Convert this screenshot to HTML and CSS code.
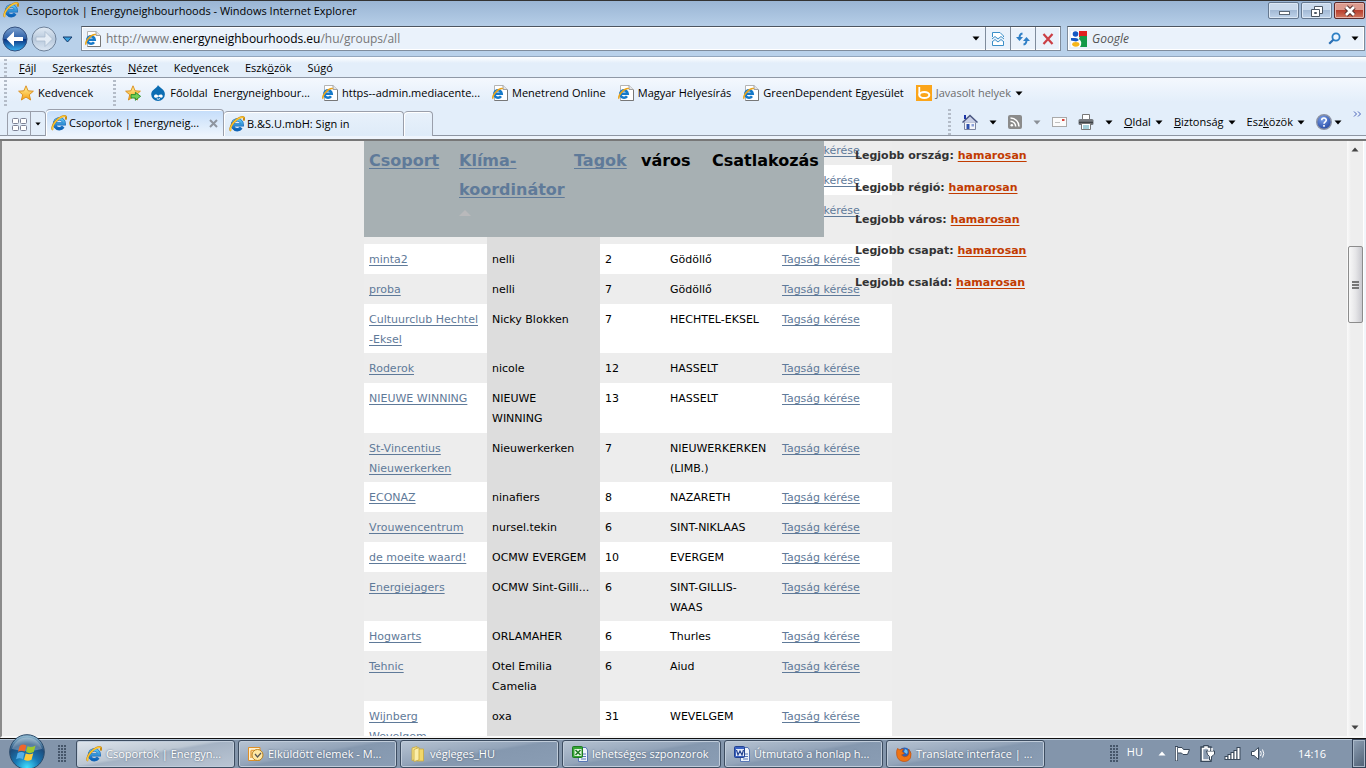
FILE: index.html
```html
<!DOCTYPE html>
<html lang="hu">
<head>
<meta charset="utf-8">
<title>Csoportok | Energyneighbourhoods</title>
<link rel="stylesheet" href="styles.css">
</head>
<body>
<svg class="defs" aria-hidden="true">
  <defs>
    <linearGradient id="gBlue" x1="0" y1="0" x2="0" y2="1"><stop offset="0" stop-color="#5cc4f4"/><stop offset="1" stop-color="#0b62b8"/></linearGradient>
    <linearGradient id="gStar" x1="0" y1="0" x2="0" y2="1"><stop offset="0" stop-color="#fff3a0"/><stop offset="1" stop-color="#f7a010"/></linearGradient>
    <linearGradient id="gBack" x1="0" y1="0" x2="0" y2="1"><stop offset="0" stop-color="#7fa3cf"/><stop offset=".48" stop-color="#2c5fa8"/><stop offset=".5" stop-color="#0a2f7c"/><stop offset="1" stop-color="#38b4f4"/></linearGradient>
    <linearGradient id="gFwd" x1="0" y1="0" x2="0" y2="1"><stop offset="0" stop-color="#e2ebf5"/><stop offset=".5" stop-color="#b8c9dc"/><stop offset="1" stop-color="#dce7f3"/></linearGradient>
    <radialGradient id="gOrb" cx=".5" cy=".95" r=".9"><stop offset="0" stop-color="#3fe0ff"/><stop offset=".4" stop-color="#1878b4"/><stop offset=".75" stop-color="#1d4c7c"/><stop offset="1" stop-color="#8ab4cc"/></radialGradient>
    <radialGradient id="gHelp" cx=".4" cy=".3" r=".8"><stop offset="0" stop-color="#7ba0e8"/><stop offset="1" stop-color="#1c3f9c"/></radialGradient>
  </defs>
  <symbol id="ie" viewBox="0 0 16 16">
    <path d="M3.4 8.9H13.2A4.9 4.9 0 1 0 12.2 11.8" fill="none" stroke="#1467b8" stroke-width="3.4"/>
    <path d="M3.6 8.7H13A4.8 4.8 0 1 0 12 11.6" fill="none" stroke="url(#gBlue)" stroke-width="2.4"/>
    <path d="M2 14.8C.4 13.6 1.6 9.6 5.2 5.8C9 1.9 13.4.2 14.7 1.5C15.3 2.2 15.1 3.4 14.5 4.6" fill="none" stroke="#c98a10" stroke-width="2"/>
    <path d="M2 14.7C.6 13.6 1.8 9.6 5.3 5.9C9 2 13.4.4 14.5 1.6" fill="none" stroke="#fdc935" stroke-width="1.2"/>
  </symbol>
  <symbol id="page" viewBox="0 0 16 16">
    <path d="M2.5.5H11L15.5 4.5V15.5H2.5Z" fill="#fff" stroke="#b4b4b4"/>
    <path d="M15.5 5V15.5H2.5" fill="none" stroke="#777"/>
    <path d="M11 .5V4.5H15.5" fill="#e4e4e4" stroke="#a0a0a0"/>
    <path d="M2.6 8.8H9.7A3.7 3.7 0 1 0 9 11.2" fill="none" stroke="#1679c9" stroke-width="2.6"/>
    <path d="M1.2 13.6C.1 12.4 1.8 8.8 4.5 6.3C7.2 3.8 10.1 2.8 10.8 3.9" fill="none" stroke="#eba51b" stroke-width="1.6"/>
  </symbol>
  <symbol id="star" viewBox="0 0 16 16"><path d="M8 .8L10.1 5.8L15.4 6.2L11.3 9.7L12.6 15L8 12.1L3.4 15L4.7 9.7L.6 6.2L5.9 5.8Z" fill="url(#gStar)" stroke="#d88a17" stroke-width=".9"/></symbol>
  <symbol id="staradd" viewBox="0 0 16 16"><use href="#star"/><path d="M6 9.6H10.4V7.3L15.6 11.3L10.4 15.3V13H6Z" fill="#72d055" stroke="#238a2b" stroke-width=".9"/></symbol>
  <symbol id="drupal" viewBox="0 0 16 16"><path d="M8 0C9.2 2.4 14.9 4.3 14.9 9.3A6.8 6.6 0 0 1 1.2 9.3C1.2 4.6 7 3.4 8 0Z" fill="#0b6db3"/><path d="M4 11.2C4.8 8.7 7 9.6 8.2 10.7C9.7 9.4 11.9 8.8 12.7 10.8C13 12.9 10.6 13.3 8.6 11.6C7 13.1 4.5 13.5 4 11.2Z" fill="#fff"/><path d="M6.8 13.8Q8.4 14.7 10 13.6" fill="none" stroke="#fff"/></symbol>
  <symbol id="bing" viewBox="0 0 16 16"><path d="M0 0H16V16H0Z" fill="#fba51a"/><path d="M3.3 2V10.3" stroke="#fff" stroke-width="1.8"/><ellipse cx="8.3" cy="10" rx="5" ry="3" fill="none" stroke="#fff" stroke-width="2"/></symbol>
  <symbol id="down" viewBox="0 0 8 5"><path d="M.5.5H7.5L4 4.5Z" fill="currentColor"/></symbol>
  <symbol id="winlogo" viewBox="0 0 20 20"><path d="M3.4 4.5Q6.3 2.2 9.4 4.1L8 9.6Q5 8 1.8 9.8Z" fill="#f0662c"/><path d="M10.5 4.7Q13.8 6.5 17.8 4L16.1 10Q12.6 12 9.2 10.1Z" fill="#9cc92f"/><path d="M1.5 10.9Q4.7 9.1 7.7 10.8L6.2 16.5Q3.2 14.7 .1 16.5Z" fill="#55aee8"/><path d="M8.8 11.4Q12.3 13 15.7 11.2L14.1 17Q10.8 18.9 7.3 17Z" fill="#fecb38"/></symbol>
</svg>

<header class="chrome">
  <div class="titlebar">
    <svg class="i16"><use href="#ie"/></svg>
    <span class="title">Csoportok | Energyneighbourhoods - Windows Internet Explorer</span>
    <div class="winbtns">
      <button class="winbtn" aria-label="Kis méret"><svg width="14" height="10" viewBox="0 0 14 10"><rect x="2.5" y="5.5" width="10" height="3" fill="#fff" stroke="#5a6673"/></svg></button>
      <button class="winbtn" aria-label="Előző méret"><svg width="14" height="12" viewBox="0 0 14 12"><path d="M4.5 1.5H12.5V8.5H4.5Z" fill="#fff" stroke="#4c5763"/><path d="M1.5 4.5H9.5V11.5H1.5Z" fill="#fff" stroke="#4c5763"/><path d="M4.5 7.5H6.5V8.5H4.5Z" fill="#fff" stroke="#4c5763"/></svg></button>
      <button class="winbtn close" aria-label="Bezárás"><svg width="14" height="12" viewBox="0 0 14 12"><path d="M3 2L11 10M11 2L3 10" stroke="#57302e" stroke-width="4.6"/><path d="M3 2L11 10M11 2L3 10" stroke="#fff" stroke-width="2.6"/></svg></button>
    </div>
  </div>

  <div class="navbar">
    <div class="travel">
      <button aria-label="Vissza"><svg width="26" height="26" viewBox="0 0 26 26"><circle cx="13" cy="13" r="12" fill="url(#gBack)" stroke="#33507f"/><path d="M4.5 13L12 5.5V11H21V15H12V20.5Z" fill="#fff"/></svg></button>
      <button aria-label="Előre"><svg width="26" height="26" viewBox="0 0 26 26"><circle cx="13" cy="13" r="12" fill="url(#gFwd)" stroke="#6e8199"/><path d="M21.5 13L14 5.5V11H5V15H14V20.5Z" fill="#e4ecf5" stroke="#a9bbce" stroke-width=".8"/></svg></button>
      <button aria-label="Legutóbbi lapok"><svg width="11" height="7" viewBox="0 0 11 7"><path d="M1 1H10L5.5 6Z" fill="#3aa0dc" stroke="#143a6c"/></svg></button>
    </div>
    <div class="address">
      <svg class="i16"><use href="#page"/></svg>
      <div class="url" role="textbox" aria-label="Cím" contenteditable="true" spellcheck="false">http://www.<span>energyneighbourhoods.eu</span>/hu/groups/all</div>
      <button class="drop" aria-label="Címlista"><svg class="arrow"><use href="#down"/></svg></button>
      <button class="cell" aria-label="Kompatibilitási nézet"><svg width="12" height="14" viewBox="0 0 12 14"><path d="M.5 5V.5H8L11.5 4V5M.5 9.5V13.5H11.5V9.5" fill="#fff" stroke="#3b8fc8"/><path d="M0 7L3 4.5L6 7L9 4.5L12 7M0 10L3 7.5L6 10L9 7.5L12 10" fill="none" stroke="#3b8fc8"/></svg></button>
      <button class="cell" aria-label="Frissítés"><svg width="14" height="14" viewBox="0 0 14 14"><path d="M6.5 1.5Q3.5 2 3.5 6M7.5 12.5Q10.5 12 10.5 8" fill="none" stroke="#2f7fc6" stroke-width="2"/><path d="M0 5H7L3.5 9ZM7 9H14L10.5 5Z" fill="#2f7fc6"/></svg></button>
      <button class="cell" aria-label="Leállítás"><svg width="12" height="12" viewBox="0 0 12 12"><path d="M1.5 1L10.5 11M10.5 1L1.5 11" stroke="#cb3f45" stroke-width="2.2"/></svg></button>
    </div>
    <div class="search">
      <svg width="16" height="16" viewBox="0 0 16 16"><path d="M0 0H16V16H0Z" fill="#fff"/><path d="M8 0H16V6H8Z" fill="#e02020"/><path d="M9 5H16V16H9Q12 11 8 8Z" fill="#149a48"/><circle cx="4.5" cy="3" r="2.8" fill="#1659c5"/><path d="M0 7H4Q8 7 7.5 9.5L5 10.5L0 9.5Z" fill="#1659c5"/><ellipse cx="4.8" cy="13.3" rx="3.6" ry="2.4" fill="#f5b51b"/></svg>
      <input type="text" placeholder="Google" aria-label="Keresés">
      <button aria-label="Keresés indítása"><svg width="13" height="13" viewBox="0 0 13 13"><circle cx="8" cy="5" r="3.6" fill="#eef6ff" stroke="#2c7fc4" stroke-width="1.8"/><path d="M5.3 7.7L1.2 11.8" stroke="#2c6fb4" stroke-width="2.2"/></svg></button>
      <button aria-label="Keresési beállítások"><svg class="arrow"><use href="#down"/></svg></button>
    </div>
  </div>

  <nav class="menubar">
    <i class="grip"></i>
    <button><u>F</u>ájl</button><button>S<u>z</u>erkesztés</button><button><u>N</u>ézet</button><button>Ked<u>v</u>encek</button><button>Eszk<u>ö</u>zök</button><button>Sú<u>g</u>ó</button>
  </nav>

  <div class="lower">
    <div class="favbar">
      <i class="grip"></i>
      <button class="fav"><svg class="i16"><use href="#star"/></svg>Kedvencek</button>
      <i class="grip"></i>
      <button class="add" aria-label="Felvétel a Kedvencek sávra"><svg class="i16"><use href="#staradd"/></svg></button>
      <a href="#"><svg class="i16"><use href="#drupal"/></svg>Főoldal&nbsp; Energyneighbour...</a>
      <a href="#"><svg class="i16"><use href="#page"/></svg>https--admin.mediacente...</a>
      <a href="#"><svg class="i16"><use href="#page"/></svg>Menetrend Online</a>
      <a href="#"><svg class="i16"><use href="#page"/></svg>Magyar Helyesírás</a>
      <a href="#"><svg class="i16"><use href="#page"/></svg>GreenDependent Egyesület</a>
      <button class="muted"><svg class="i16"><use href="#bing"/></svg>Javasolt helyek<svg class="arrow"><use href="#down"/></svg></button>
    </div>
    <div class="tabrow">
      <div class="quick">
        <button aria-label="Gyorslapok"><svg width="15" height="13" viewBox="0 0 15 13"><g fill="#fff" stroke="#7d8296"><rect x=".5" y=".5" width="6" height="5" rx="1"/><rect x="8.5" y=".5" width="6" height="5" rx="1"/><rect x=".5" y="7.5" width="6" height="5" rx="1"/><rect x="8.5" y="7.5" width="6" height="5" rx="1"/></g></svg></button>
        <button aria-label="Laplista"><svg class="arrow small"><use href="#down"/></svg></button>
      </div>
      <div class="tab active"><svg class="i16"><use href="#ie"/></svg><span>Csoportok | Energyneig...</span><button aria-label="Lap bezárása"><svg width="9" height="9" viewBox="0 0 9 9"><path d="M1 1L8 8M8 1L1 8" stroke="#8e959f" stroke-width="2"/></svg></button></div>
      <div class="tab"><svg class="i16"><use href="#ie"/></svg><span>B.&amp;S.U.mbH: Sign in</span></div>
      <button class="newtab" aria-label="Új lap"></button>
      <div class="commands">
        <i class="grip"></i>
        <button aria-label="Kezdőlap"><svg class="i16" viewBox="0 0 16 16"><path d="M2.5 8H13.5V15.5H2.5Z" fill="#f4f5fa" stroke="#7c84a0"/><path d="M.5 8.5L8 1.5L15.5 8.5" fill="#c8cfe6" stroke="#4a5580" stroke-width="1.5"/><path d="M3 1V5" stroke="#1c35a8" stroke-width="2"/><path d="M4.5 10H7.5V15H4.5Z" fill="#2c4fae"/><path d="M9.5 10H12V12.5H9.5Z" fill="#8aa0d8"/></svg></button>
        <svg class="arrow"><use href="#down"/></svg>
        <button aria-label="Hírcsatornák"><svg width="14" height="14" viewBox="0 0 14 14"><rect width="14" height="14" rx="2" fill="#8b8b8b"/><circle cx="3.8" cy="10.2" r="1.3" fill="#fff"/><path d="M2.5 6.3A5.2 5.2 0 0 1 7.7 11.5M2.5 3A8.5 8.5 0 0 1 11 11.5" fill="none" stroke="#fff" stroke-width="1.5"/></svg></button>
        <svg class="arrow dim"><use href="#down"/></svg>
        <button aria-label="Levelek olvasása"><svg width="15" height="12" viewBox="0 0 15 12"><rect x=".5" y="1.5" width="14" height="9" fill="#fbfbfb" stroke="#a9a9a9"/><path d="M10 3H12.5V5H10Z" fill="#d8443c"/><path d="M3 6.5H8" stroke="#c0c0c0"/></svg></button>
        <button aria-label="Nyomtatás"><svg class="i16" viewBox="0 0 16 16"><path d="M4.5 6V.5H11.5V6" fill="#fff" stroke="#777"/><rect x=".5" y="5" width="15" height="6" rx="1.5" fill="#75797e"/><path d="M1 8.5H15" stroke="#3e4246" stroke-width="1.5"/><path d="M3.5 9.5H12.5V15.5H3.5Z" fill="#fff" stroke="#777"/><path d="M5 12H11M5 14H11" stroke="#4a9fb5"/></svg></button>
        <svg class="arrow"><use href="#down"/></svg>
        <button><span><u>O</u>ldal</span><svg class="arrow"><use href="#down"/></svg></button>
        <button><span><u>B</u>iztonság</span><svg class="arrow"><use href="#down"/></svg></button>
        <button><span>Esz<u>k</u>özök</span><svg class="arrow"><use href="#down"/></svg></button>
        <button class="help" aria-label="Súgó"><svg class="i16" viewBox="0 0 16 16"><circle cx="8" cy="8" r="7.3" fill="url(#gHelp)" stroke="#8c93a5" stroke-width="1.4"/><path d="M5.7 6.2C5.7 3.3 10.3 3.3 10.3 6.1C10.3 7.8 8 7.8 8 9.7M8 11V12.7" fill="none" stroke="#fff" stroke-width="1.6"/></svg><svg class="arrow"><use href="#down"/></svg></button>
        <button class="more" aria-label="További parancsok"><svg width="9" height="6" viewBox="0 0 9 6"><path d="M1 .5L3.5 3L1 5.5M5 .5L7.5 3L5 5.5" fill="none" stroke="#4a63b8"/></svg></button>
      </div>
    </div>
  </div>
</header>

<main class="view">
  <div class="page">
    <div class="site">
      <table class="groups">
        <colgroup><col class="c1"><col class="c2"><col class="c3"><col class="c4"><col class="c5"></colgroup>
        <tbody>
        <tr><td></td><td class="sorted"></td><td></td><td></td><td><a href="#">Tagság kérése</a></td></tr>
        <tr><td></td><td class="sorted"></td><td></td><td></td><td><a href="#">Tagság kérése</a></td></tr>
        <tr><td></td><td class="sorted"><br><br></td><td></td><td></td><td><a href="#">Tagság kérése</a></td></tr>
        <tr><td><a href="#">minta2</a></td><td class="sorted">nelli</td><td>2</td><td>Gödöllő</td><td><a href="#">Tagság kérése</a></td></tr>
        <tr><td><a href="#">proba</a></td><td class="sorted">nelli</td><td>7</td><td>Gödöllő</td><td><a href="#">Tagság kérése</a></td></tr>
        <tr><td><a href="#">Cultuurclub Hechtel<br>-Eksel</a></td><td class="sorted">Nicky Blokken</td><td>7</td><td>HECHTEL-EKSEL</td><td><a href="#">Tagság kérése</a></td></tr>
        <tr><td><a href="#">Roderok</a></td><td class="sorted">nicole</td><td>12</td><td>HASSELT</td><td><a href="#">Tagság kérése</a></td></tr>
        <tr><td><a href="#">NIEUWE WINNING</a></td><td class="sorted">NIEUWE<br>WINNING</td><td>13</td><td>HASSELT</td><td><a href="#">Tagság kérése</a></td></tr>
        <tr><td><a href="#">St-Vincentius<br>Nieuwerkerken</a></td><td class="sorted">Nieuwerkerken</td><td>7</td><td>NIEUWERKERKEN<br>(LIMB.)</td><td><a href="#">Tagság kérése</a></td></tr>
        <tr><td><a href="#">ECONAZ</a></td><td class="sorted">ninafiers</td><td>8</td><td>NAZARETH</td><td><a href="#">Tagság kérése</a></td></tr>
        <tr><td><a href="#">Vrouwencentrum</a></td><td class="sorted">nursel.tekin</td><td>6</td><td>SINT-NIKLAAS</td><td><a href="#">Tagság kérése</a></td></tr>
        <tr><td><a href="#">de moeite waard!</a></td><td class="sorted">OCMW EVERGEM</td><td>10</td><td>EVERGEM</td><td><a href="#">Tagság kérése</a></td></tr>
        <tr><td><a href="#">Energiejagers</a></td><td class="sorted">OCMW Sint-Gilli...</td><td>6</td><td>SINT-GILLIS-<br>WAAS</td><td><a href="#">Tagság kérése</a></td></tr>
        <tr><td><a href="#">Hogwarts</a></td><td class="sorted">ORLAMAHER</td><td>6</td><td>Thurles</td><td><a href="#">Tagság kérése</a></td></tr>
        <tr><td><a href="#">Tehnic</a></td><td class="sorted">Otel Emilia<br>Camelia</td><td>6</td><td>Aiud</td><td><a href="#">Tagság kérése</a></td></tr>
        <tr><td><a href="#">Wijnberg<br>Wevelgem</a></td><td class="sorted">oxa</td><td>31</td><td>WEVELGEM</td><td><a href="#">Tagság kérése</a></td></tr>
        </tbody>
      </table>
      <aside class="best">
        <p>Legjobb ország: <a href="#">hamarosan</a></p>
        <p>Legjobb régió: <a href="#">hamarosan</a></p>
        <p>Legjobb város: <a href="#">hamarosan</a></p>
        <p>Legjobb csapat: <a href="#">hamarosan</a></p>
        <p>Legjobb család: <a href="#">hamarosan</a></p>
      </aside>
      <table class="sticky">
        <colgroup><col class="h1"><col class="h2"><col class="h3"><col class="h4"><col class="h5"></colgroup>
        <thead><tr><th><a href="#">Csoport</a></th><th><a href="#">Klíma-<br>koordinátor</a><svg width="12" height="6" viewBox="0 0 12 6"><path d="M0 6L6 0L12 6Z" fill="#b9b9bb"/></svg></th><th><a href="#">Tagok</a></th><th>város</th><th>Csatlakozás</th></tr></thead>
      </table>
    </div>
  </div>
  <div class="scrollbar">
    <button aria-label="Fel"><svg width="8" height="5" viewBox="0 0 8 5"><path d="M4 .5L7.5 4.5H.5Z" fill="#444"/></svg></button>
    <div class="track"><div class="thumb"><i></i><i></i><i></i></div></div>
    <button aria-label="Le"><svg class="arrow"><use href="#down"/></svg></button>
  </div>
</main>

<footer class="taskbar">
  <button class="start" aria-label="Start"><svg width="36" height="36" viewBox="0 0 36 36"><circle cx="18" cy="18" r="17.3" fill="url(#gOrb)" stroke="#2a4a6a"/><path d="M3 15A15.5 15.5 0 0 1 33 15Q18 19 3 15Z" fill="#fff" opacity=".28"/><use href="#winlogo" x="7" y="7" width="22" height="22"/></svg></button>
  <i class="dots"></i>
  <div class="tasks">
    <button class="task current"><svg class="i16"><use href="#ie"/></svg>Csoportok | Energyn...</button>
    <button class="task"><svg class="i16" viewBox="0 0 16 16"><path d="M.5 1.5H12V14.5H.5Z" fill="#fff2cf" stroke="#df8f27"/><path d="M3 4.5H12M3 4.5V12" stroke="#e8a447" stroke-width="1.5"/><circle cx="9.5" cy="9" r="5.5" fill="#ffe7a4" stroke="#b98220"/><path d="M7 8L9.5 11L13 7" fill="none" stroke="#555" stroke-width="1.2"/></svg>Elküldött elemek - M...</button>
    <button class="task"><svg class="i16" viewBox="0 0 16 16"><path d="M2 2L7 .5V13L2 14.5Z" fill="#f7e48c" stroke="#c9a93c" stroke-width=".8"/><path d="M7 3H13.5V15H7Z" fill="#f3d869" stroke="#c9a93c" stroke-width=".8"/><path d="M4 3.5L9 1.5V14L4 15.5Z" fill="#fbeea9" stroke="#c9a93c" stroke-width=".8"/></svg>végleges_HU</button>
    <button class="task"><svg class="i16" viewBox="0 0 16 16"><path d="M6.5 1.5H14L15.5 4V15.5H6.5Z" fill="#eef3fb" stroke="#5877b5"/><path d="M9 8H14M9 10.5H14M9 13H14" stroke="#5877b5"/><rect x=".5" y=".5" width="10" height="11" rx="1" fill="#35a535" stroke="#1d7a22"/><rect x="2.5" y="3" width="7" height="7" fill="#e8f7e4"/><path d="M3.5 4L8.5 9M8.5 4L3.5 9" stroke="#1d7a22" stroke-width="1.5"/></svg>lehetséges szponzorok</button>
    <button class="task"><svg class="i16" viewBox="0 0 16 16"><path d="M6.5 1.5H14L15.5 4V15.5H6.5Z" fill="#eef3fb" stroke="#5877b5"/><path d="M9 8H14M9 10.5H14M9 13H14" stroke="#5877b5"/><rect x=".5" y=".5" width="10" height="11" rx="1" fill="#3b63c4" stroke="#23428f"/><rect x="2" y="3" width="8" height="7" fill="#e6edfb"/><path d="M2.5 4L4 9L6 5L8 9L9.5 4" fill="none" stroke="#23428f" stroke-width="1.2"/></svg>Útmutató a honlap h...</button>
    <button class="task"><svg class="i16" viewBox="0 0 16 16"><circle cx="8.5" cy="8" r="6.5" fill="#2b62b8"/><path d="M9 3Q13 4 11 8L8 6Z" fill="#6fc0f0"/><path d="M1.5 2.5L4 4Q6 2.5 7.5 3L6 5.5L8.5 7.5L5.5 9Q8 12 11.5 10Q14 8 12.5 3Q16.5 7 14.5 12A7.5 7.5 0 0 1 .8 9.5Q0 5 1.5 2.5Z" fill="#ee7414" stroke="#b8480c" stroke-width=".6"/></svg>Translate interface | ...</button>
  </div>
  <div class="tray">
    <i class="dots"></i>
    <span class="lang">HU</span>
    <button aria-label="Rejtett ikonok"><svg width="8" height="5" viewBox="0 0 8 5"><path d="M4 .5L7.5 4.5H.5Z" fill="#fff"/></svg></button>
    <svg width="17" height="17" viewBox="0 0 17 17"><path d="M2.5 1V16" stroke="#39485a" stroke-width="3"/><path d="M3.5 2.5H8L9.5 4.5H15.5L13.5 9.5H9L7.5 8H3.5Z" fill="#fff" stroke="#39485a"/><path d="M2.5 2V15.5" stroke="#fff" stroke-width="1.4"/></svg>
    <svg width="17" height="17" viewBox="0 0 17 17"><path d="M6 1.5H8V3H11V15.5H3V3H6Z" fill="none" stroke="#39485a" stroke-width="3.4"/><path d="M6 2H8V3.5H10.5V15H3.5V3.5H6Z" fill="#8a9bb0" stroke="#fff" stroke-width="1.5"/><path d="M7.5 6H15.5V9Q14 11 12.5 11.5V15H10.5V11.5Q8 10 7.5 6Z" fill="#fff" stroke="#39485a"/><path d="M10 3V6M13 3V6" stroke="#fff" stroke-width="1.5"/></svg>
    <svg width="18" height="15" viewBox="0 0 18 15"><g fill="#fff" stroke="#39485a"><rect x="1" y="10.5" width="3" height="3"/><rect x="4" y="8.5" width="3" height="5"/><rect x="7" y="6.5" width="3" height="7"/><rect x="10" y="4.5" width="3" height="9"/><rect x="13" y="1.5" width="3" height="12"/></g></svg>
    <svg width="15" height="15" viewBox="0 0 15 15"><path d="M1.5 5.5H4L8.5 1.5V13.5L4 9.5H1.5Z" fill="#fff" stroke="#39485a"/><path d="M10.5 5Q12 7.5 10.5 10M12.5 3.5Q15 7.5 12.5 11.5" fill="none" stroke="#fff"/></svg>
    <time>14:16</time>
    <button class="desktop" aria-label="Asztal megjelenítése"></button>
  </div>
</footer>
</body>
</html>
```
FILE: styles.css
```css
* { box-sizing: border-box; }
body {
  margin: 0;
  height: 100vh;
  display: flex;
  flex-direction: column;
  overflow: hidden;
  font: 11px/16px "Open Sans", "Noto Sans", sans-serif;
  color: #000;
}
button {
  display: flex;
  align-items: center;
  margin: 0;
  padding: 0;
  border: 0;
  background: none;
  font: inherit;
  color: inherit;
  white-space: nowrap;
}
.menubar button { display: block; }
svg { flex: none; display: block; }
.defs { position: absolute; width: 0; height: 0; }
.i16 { width: 16px; height: 16px; }
.arrow { width: 8px; height: 5px; }
.arrow.small { width: 6px; height: 4px; }
.arrow.dim { color: #8a8f96; }
.grip {
  flex: none;
  width: 3px;
  background: repeating-linear-gradient(#b4bcc8 0 2px, transparent 2px 4px);
}

/* window frame */
.chrome {
  flex: none;
  background: linear-gradient(#9ab5d4, #b9d1ea 28px);
  border-top: 1px solid #333;
}
.titlebar { display: flex; height: 23px; padding-left: 3px; gap: 7px; }
.titlebar > .i16 { margin-top: 1px; }
.title { flex: 1; line-height: 20px; white-space: nowrap; }
.winbtns { display: flex; gap: 2px; padding: 1px 1px 0 0; }
.winbtn {
  width: 31px;
  height: 17px;
  justify-content: center;
  border: 1px solid #65788f;
  border-radius: 2px;
  background: linear-gradient(#c9d9eb 50%, #a3bad5 50%, #bfd3ea);
  box-shadow: inset 0 0 0 1px #dbe7f4;
}
.winbtn.close {
  border-color: #5c2a2c;
  background: linear-gradient(#dc9a8e 50%, #b93f2e 50%, #d0765f);
  box-shadow: inset 0 0 0 1px #e7b5ab;
}
.navbar { display: flex; height: 32px; padding: 2px 1px 0 2px; }
.travel { display: flex; align-items: center; width: 79px; height: 26px; gap: 3px; }
.travel button:last-child { margin-left: 2px; }
.address, .search {
  display: flex;
  align-items: center;
  height: 25px;
  background: #eaf2fb;
  border: 1px solid #7f8c9c;
  border-top-color: #4d5661;
  box-shadow: inset 0 0 0 1px #fff;
}
.address { flex: 1; padding-left: 3px; margin-right: 6px; }
.url { flex: 1; padding-left: 5px; color: #777; outline: 0; font-size: 12px; white-space: nowrap; }
.url span { color: #000; }
.drop { width: 18px; justify-content: center; }
.cell { width: 25px; height: 23px; justify-content: center; border-left: 1px solid #7f8c9c; }
.search { width: 298px; padding: 0 5px 0 3px; gap: 5px; }
.search input {
  flex: 1;
  min-width: 0;
  padding: 0;
  border: 0;
  outline: 0;
  background: none;
  font: italic 12px/16px "Open Sans", sans-serif;
}
.search input::placeholder { color: #555; }
.search button:last-child { margin-left: 5px; }

.menubar {
  display: flex;
  align-items: center;
  height: 22px;
  padding: 2px 0 0 4px;
  gap: 16px;
  border-top: 1px solid #93a6bd;
  border-bottom: 1px solid #8f98a6;
  background: linear-gradient(#fff, #e3eefa 6px);
}
.menubar .grip { height: 18px; margin-right: -4px; }
.lower { background: linear-gradient(#f4f8fe, #e3eefa 24px); }
.favbar { display: flex; align-items: center; height: 30px; padding-left: 4px; gap: 12px; }
.favbar .grip { height: 26px; }
.favbar a, .favbar button {
  display: flex;
  align-items: center;
  gap: 4px;
  color: #000;
  text-decoration: none;
  white-space: nowrap;
}
.favbar .fav { margin: 0 8px 0 -1px; }
.favbar .add { margin: 0 -3px; }
.favbar .muted { color: #6d6d6d; }
.favbar .muted .arrow { color: #000; }

.tabrow {
  display: flex;
  align-items: flex-end;
  height: 33px;
  padding: 0 0 3px 7px;
  border-bottom: 2px solid #777;
  background: linear-gradient(transparent 27px, #8e96a3 27px 28px, #eef4fc 28px);
}
.quick { display: flex; height: 25px; border: 1px solid #9a9fab; border-bottom: 0; border-radius: 4px 4px 0 0; }
.quick button { width: 22px; justify-content: center; }
.quick button:last-child { width: 15px; border-left: 1px solid #9a9fab; }
.tab, .newtab {
  display: flex;
  align-items: center;
  width: 180px;
  height: 25px;
  padding: 0 5px;
  gap: 2px;
  border: 1px solid #9a9fab;
  border-left: 0;
  border-bottom: 0;
  border-radius: 4px 4px 0 0;
  background: linear-gradient(#e8f1fb, #deebf8);
  box-shadow: inset 1px 1px 0 #fff;
  white-space: nowrap;
}
.tab span { flex: 1; }
.tab.active { height: 27px; width: 178px; background: linear-gradient(#c4ddfa, #eef5fd); }
.newtab { width: 29px; }
.commands { display: flex; align-items: center; height: 28px; margin-left: auto; padding-right: 4px; gap: 11px; }
.commands .grip { height: 26px; }
.commands button { gap: 4px; }
.commands .help { gap: 2px; }
.more { align-self: flex-start; margin-top: 3px; }

/* browser content */
.view { flex: 1; display: flex; min-height: 0; border-left: 2px solid #8b8b8b; border-right: 2px solid #f2f6fb; border-bottom: 2px solid #f8f8f8; }
.page {
  flex: 1;
  min-width: 0;
  overflow: hidden;
  background: #ececec;
  font: 11px/1.8 "DejaVu Sans", Verdana, sans-serif;
}
.page a { text-decoration-skip-ink: none; text-underline-offset: 2px; }
.site { position: relative; display: flex; align-items: flex-start; width: 961px; margin: 0 auto; padding-left: 170px; }
.groups { flex: none; width: 528px; margin-top: -6px; table-layout: fixed; border-collapse: collapse; }
.c1 { width: 123px; }
.c2 { width: 113px; }
.c3 { width: 65px; }
.c4 { width: 112px; }
.c5 { width: 115px; }
.groups td { padding: 6px 5px 4px; vertical-align: top; white-space: nowrap; }
.groups tr { background: #ededed; }
.groups tr:nth-child(even) { background: #fff; }
.groups .sorted { background: #ddd; }
.groups a, .sticky a { color: #5f7a99; }
.best { position: relative; margin-left: -37px; padding-top: 5px; color: #333; font-weight: bold; }
.best p { margin: 0 0 12px; white-space: nowrap; }
.best a { color: #c23b00; }
.sticky {
  position: absolute;
  top: 0;
  left: 170px;
  width: 460px;
  height: 96px;
  table-layout: fixed;
  border-collapse: collapse;
  background: #a7b0b3;
  font-size: 16px;
  text-align: left;
}
.h1 { width: 90px; }
.h2 { width: 115px; }
.h3 { width: 67px; }
.h4 { width: 71px; }
.h5 { width: 117px; }
.sticky th { padding: 6px 5px 4px; vertical-align: top; white-space: nowrap; }
.sticky svg { margin-top: 5px; }

.scrollbar { display: flex; flex-direction: column; width: 17px; background: linear-gradient(90deg, #fafafa, #eee 4px); border-right: 1px solid #fff; }
.scrollbar button { height: 17px; justify-content: center; color: #444; }
.track { flex: 1; padding-top: 88px; }
.thumb {
  display: flex;
  flex-direction: column;
  align-items: center;
  justify-content: center;
  gap: 1px;
  width: 15px;
  height: 77px;
  margin: 0 auto;
  border: 1px solid #8c8c8c;
  border-radius: 2px;
  background: linear-gradient(90deg, #f8f8f8, #e6e6e8 50%, #c9c9cf);
}
.thumb i { width: 7px; height: 2px; background: #777; }

/* taskbar */
.taskbar {
  position: relative;
  flex: none;
  display: flex;
  align-items: center;
  height: 30px;
  padding-left: 9px;
  border-top: 1px solid #111;
  box-shadow: inset 0 1px 0 #b9c9da;
  background: #8395ab;
  color: #fff;
}
.start { width: 49px; height: 36px; margin-top: -4px; }
.dots {
  flex: none;
  width: 9px;
  height: 18px;
  background: radial-gradient(circle at 1px 1px, #46566a 1px, transparent 1px) 0 0 / 3px 3px;
}
.tasks { display: flex; gap: 3px; margin-left: 9px; }
.task {
  width: 159px;
  height: 28px;
  padding: 0 9px;
  gap: 4px;
  border: 1px solid #3d4d61;
  border-radius: 3px;
  box-shadow: inset 0 0 0 1px #c0ccda;
  background: linear-gradient(170deg, #b7c4d3, #93a4b9 45%, #8598af 50%, #8a9db4);
  text-shadow: 0 0 2px #46566b;
}
.task.current { background: linear-gradient(170deg, #dfe5ec, #bcc7d3 45%, #a5b3c4 50%, #bac5d3); }
.tray { display: flex; align-items: center; height: 29px; margin-left: auto; gap: 8px; }
.lang { margin: -4px 7px 0 0; }
.tray time { margin: 0 18px 0 25px; }
.desktop { width: 14px; height: 29px; border: 1px solid #35445a; box-shadow: inset 0 0 0 1px #a9b8c8; background: linear-gradient(135deg, #90a1b5, #4f6075); }
```
